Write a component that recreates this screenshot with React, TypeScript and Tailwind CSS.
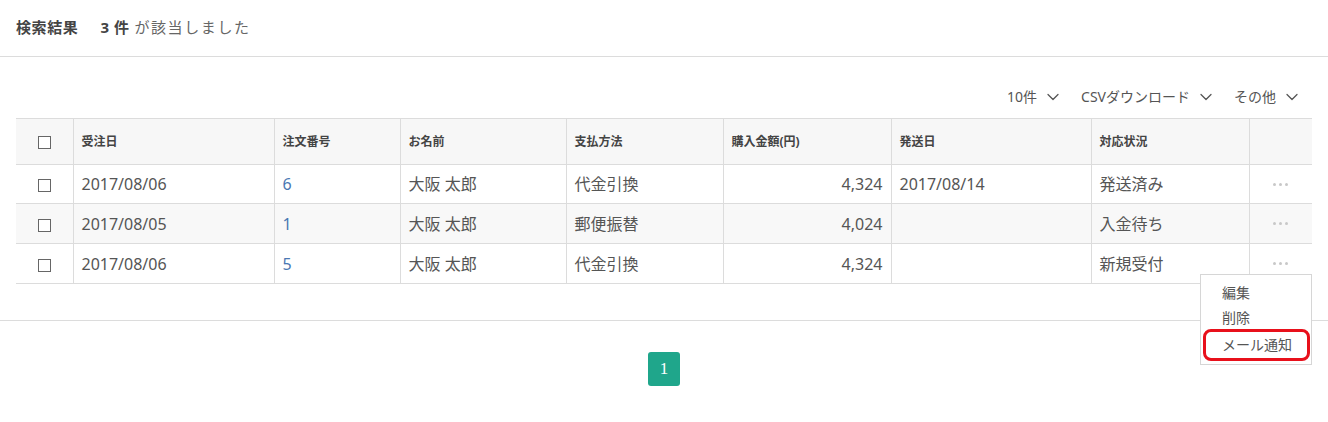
import React from "react";
import { ChevronDown } from "lucide-react";

const rows = [
  { date: "2017/08/06", no: "6", name: "大阪 太郎", pay: "代金引換", amount: "4,324", ship: "2017/08/14", status: "発送済み", bg: "bg-white" },
  { date: "2017/08/05", no: "1", name: "大阪 太郎", pay: "郵便振替", amount: "4,024", ship: "", status: "入金待ち", bg: "bg-[#f8f8f8]" },
  { date: "2017/08/06", no: "5", name: "大阪 太郎", pay: "代金引換", amount: "4,324", ship: "", status: "新規受付", bg: "bg-white" },
];

function Checkbox() {
  return <span className="inline-block w-[13px] h-[13px] border border-[#666] bg-white align-middle" />;
}

function Dots() {
  return (
    <span className="flex gap-[3px] justify-center items-center">
      <span className="w-[3px] h-[3px] rounded-full bg-[#c8c8c8]" />
      <span className="w-[3px] h-[3px] rounded-full bg-[#c8c8c8]" />
      <span className="w-[3px] h-[3px] rounded-full bg-[#c8c8c8]" />
    </span>
  );
}

export default function App() {
  const font = { fontFamily: '"Noto Sans", "Noto Sans CJK JP", sans-serif' };
  return (
    <div className="relative w-[1328px] h-[422px] bg-white text-[#555]" style={font}>
      <div className="h-[57px] border-b border-[#dcdcdc] flex items-center pl-4 pb-[1px]">
        <span className="text-[15px] font-bold text-[#444] tracking-[0.6px]">検索結果</span>
        <span className="ml-[22px] text-[15px] font-bold text-[#444] tracking-[0.5px]">3 件</span>
        <span className="ml-[5px] text-[15px] text-[#666] tracking-[1.6px]">が該当しました</span>
      </div>

      <div className="px-4">
        <div className="h-[61px] flex items-center justify-end gap-[18px] pr-[10px] pt-[18px] text-[14px] text-[#555]">
          <span className="flex items-center gap-[6px]">10件<ChevronDown size={20} strokeWidth={1.5} /></span>
          <span className="flex items-center gap-[6px]">CSVダウンロード<ChevronDown size={20} strokeWidth={1.5} /></span>
          <span className="flex items-center gap-[6px]">その他<ChevronDown size={20} strokeWidth={1.5} /></span>
        </div>

        <table className="w-[1296px] table-fixed border-collapse">
          <colgroup>
            <col className="w-[57px]" />
            <col className="w-[201px]" />
            <col className="w-[126px]" />
            <col className="w-[166px]" />
            <col className="w-[157px]" />
            <col className="w-[168px]" />
            <col className="w-[200px]" />
            <col className="w-[158px]" />
            <col className="w-[63px]" />
          </colgroup>
          <thead>
            <tr className="h-[46px] bg-[#f7f7f7] border-t border-b border-[#dcdcdc] text-[12px] font-bold text-[#444] text-left">
              <th className="text-center font-normal"><Checkbox /></th>
              <th className="border-l border-[#dcdcdc] px-2">受注日</th>
              <th className="border-l border-[#dcdcdc] px-2">注文番号</th>
              <th className="border-l border-[#dcdcdc] px-2">お名前</th>
              <th className="border-l border-[#dcdcdc] px-2">支払方法</th>
              <th className="border-l border-[#dcdcdc] px-2">購入金額(円)</th>
              <th className="border-l border-[#dcdcdc] px-2">発送日</th>
              <th className="border-l border-[#dcdcdc] px-2">対応状況</th>
              <th className="border-l border-[#dcdcdc]"></th>
            </tr>
          </thead>
          <tbody>
            {rows.map((r, i) => (
              <tr key={i} className={`${i === 0 ? "h-[39px]" : "h-[40px]"} border-b border-[#dcdcdc] text-[16px] ${r.bg}`}>
                <td className="text-center"><Checkbox /></td>
                <td className="border-l border-[#dcdcdc] px-2">{r.date}</td>
                <td className="border-l border-[#dcdcdc] px-2 text-[#4a78b3]">{r.no}</td>
                <td className="border-l border-[#dcdcdc] px-2">{r.name}</td>
                <td className="border-l border-[#dcdcdc] px-2">{r.pay}</td>
                <td className="border-l border-[#dcdcdc] px-2 text-right">{r.amount}</td>
                <td className="border-l border-[#dcdcdc] px-2">{r.ship}</td>
                <td className="border-l border-[#dcdcdc] px-2">{r.status}</td>
                <td className="border-l border-[#dcdcdc]"><Dots /></td>
              </tr>
            ))}
          </tbody>
        </table>
      </div>

      <div className="mt-[36px] border-t border-[#dcdcdc] flex justify-center pt-[31px]">
        <span
          className="w-[32px] h-[34px] rounded-[3px] bg-[#1fa68b] text-white text-[17px] flex items-center justify-center"
          style={{ fontFamily: '"Liberation Serif", serif' }}
        >
          1
        </span>
      </div>

      <div className="absolute left-[1200px] top-[274px] w-[112px] h-[91px] bg-white border border-[#d6d6d6] text-[14px] text-[#555] pt-[7px]">
        <div className="pl-[21px] h-[25px] leading-[22px]">編集</div>
        <div className="pl-[21px] h-[22px] leading-[22px]">削除</div>
        <div className="ml-[2px] mr-[1px] h-[32px] border-[3px] border-[#e8101b] rounded-[8px] pl-[16px] leading-[25px]">メール通知</div>
      </div>
    </div>
  );
}
